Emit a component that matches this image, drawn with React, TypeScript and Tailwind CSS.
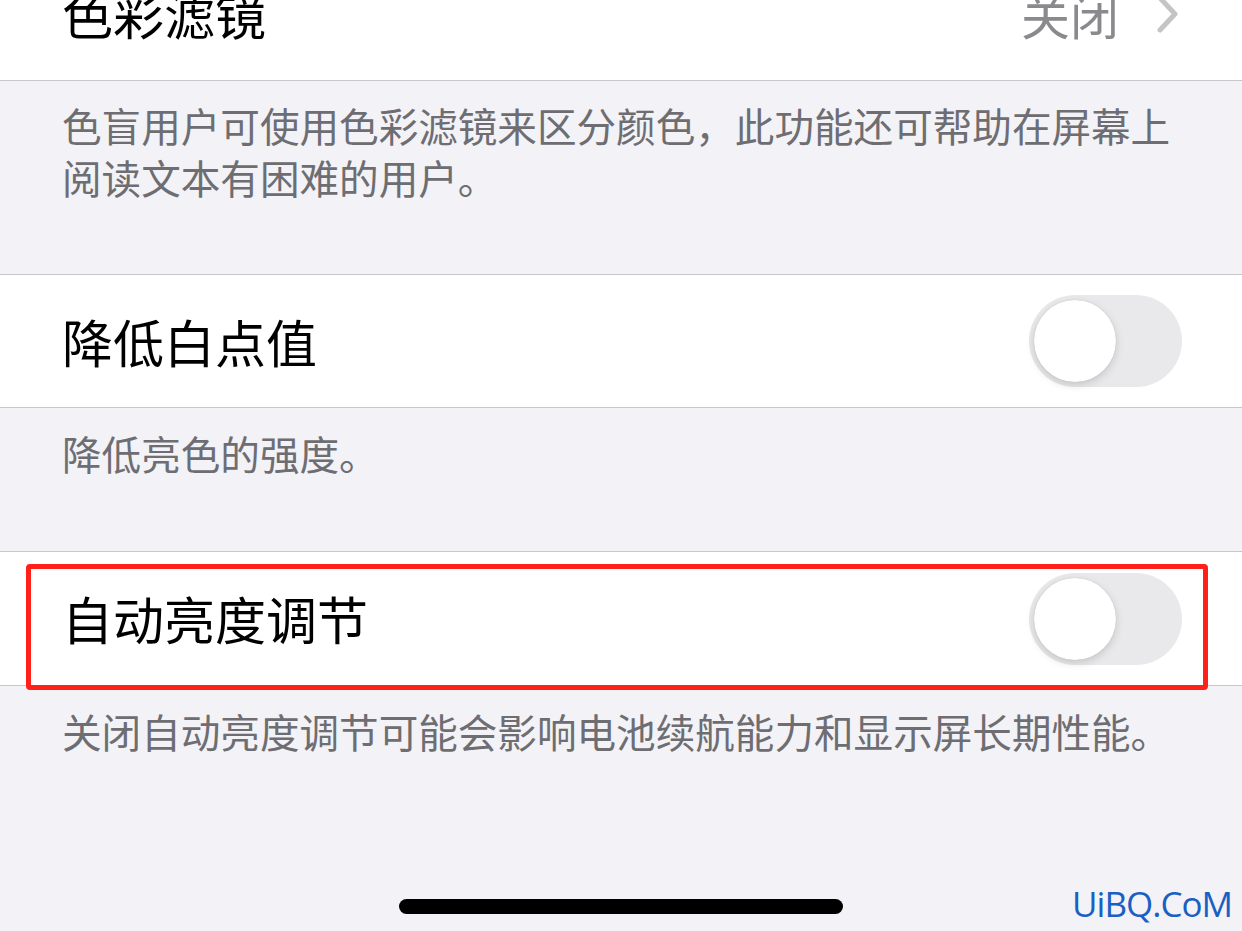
const font = { fontFamily: '"Noto Sans CJK SC", "Noto Sans", sans-serif' };

const Toggle = () => (
  <div className="relative h-[92px] w-[153px] rounded-full bg-[#e9e9eb]">
    <div className="absolute left-[5px] top-[5px] h-[82px] w-[82px] rounded-full bg-white shadow-[0_3px_8px_rgba(0,0,0,0.15),0_0_1px_rgba(0,0,0,0.2)]" />
  </div>
);

const Footer = ({ lines, className }: { lines: string[]; className: string }) => (
  <div className={`pl-[62px] pr-[30px] text-[39.6px] leading-[52px] text-[#6d6d72] ${className}`}>
    {lines.map((l) => (
      <div key={l} className="whitespace-nowrap">{l}</div>
    ))}
  </div>
);

export default function App() {
  return (
    <div className="h-[931px] w-[1242px] overflow-hidden bg-[#f2f2f7]" style={font}>
      {/* 色彩滤镜 */}
      <div className="-mt-[53px] flex h-[134px] items-center justify-between border-b border-[#c8c7cc] bg-white pl-[62px] pr-[63px]">
        <span className="text-[51px] text-black">色彩滤镜</span>
        <div className="flex items-center gap-[38px]">
          <span className="text-[49px] text-[#8a8a8e]">关闭</span>
          <svg width="22" height="38" viewBox="0 0 22 38" fill="none">
            <path d="M3 3 L18 19 L3 35" stroke="#c4c4c7" strokeWidth="5" strokeLinecap="round" strokeLinejoin="round" />
          </svg>
        </div>
      </div>
      <Footer
        className="h-[193px] pt-[18px]"
        lines={['色盲用户可使用色彩滤镜来区分颜色，此功能还可帮助在屏幕上', '阅读文本有困难的用户。']}
      />

      {/* 降低白点值 */}
      <div className="flex h-[134px] items-center justify-between border-y border-[#c8c7cc] bg-white pl-[62px] pr-[60px]">
        <span className="text-[51px] text-black">降低白点值</span>
        <Toggle />
      </div>
      <Footer className="h-[143px] pt-[19px]" lines={['降低亮色的强度。']} />

      {/* 自动亮度调节 */}
      <div className="relative flex h-[135px] items-center justify-between border-y border-[#c8c7cc] bg-white pl-[62px] pr-[60px]">
        <span className="text-[51px] text-black">自动亮度调节</span>
        <Toggle />
        <div className="pointer-events-none absolute bottom-[-5px] left-[26px] right-[34px] top-[12px] rounded-[4px] border-[5px] border-[#ff2019]" />
      </div>
      <Footer className="h-[130px] pt-[19px]" lines={['关闭自动亮度调节可能会影响电池续航能力和显示屏长期性能。']} />

      {/* home indicator + watermark */}
      <div className="relative flex h-[100px] justify-center pt-[83px]">
        <div className="h-[15px] w-[444px] rounded-full bg-black" />
        <span
          className="absolute right-[10px] top-[66px] text-[35px] leading-[44px] tracking-[-1px] text-[#1a5fc4]"
          style={{ fontFamily: '"Open Sans", sans-serif' }}
        >
          UiBQ.CoM
        </span>
      </div>
    </div>
  );
}
